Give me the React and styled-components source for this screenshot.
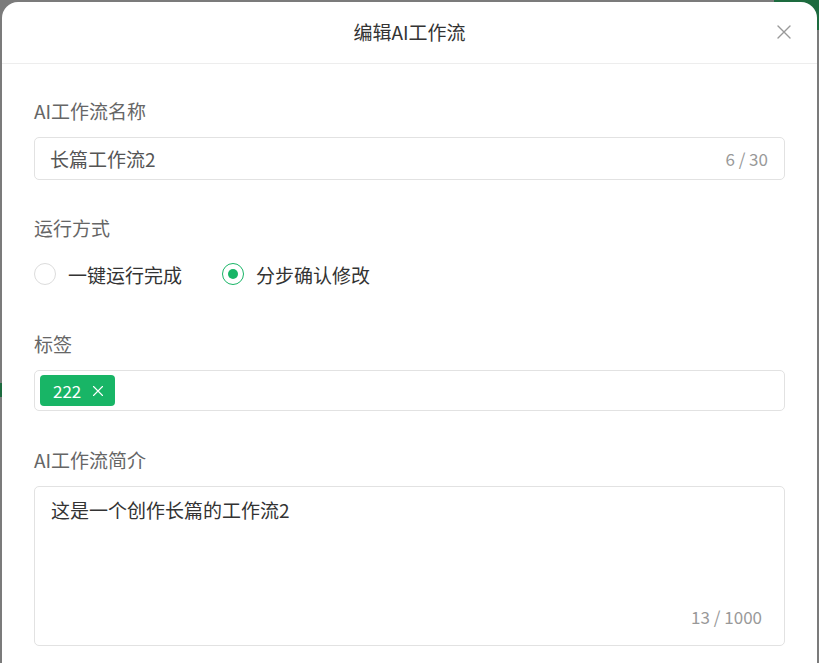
import styled, { createGlobalStyle } from "styled-components";

const Global = createGlobalStyle`
  * { box-sizing: border-box; }
  html, body { margin: 0; padding: 0; }
  body {
    background: #7b7b7b;
    font-family: "Noto Sans CJK SC", "Noto Sans", sans-serif;
    overflow: hidden;
  }
`;

const Backdrop = styled.div`
  position: relative;
  width: 819px;
  height: 663px;
  background: #7b7b7b;
  padding: 2px 2px 0 2px;
  overflow: hidden;
`;

const Behind = styled.div`
  position: absolute;
  background: #1d6b3f;
  ${({ $side }) =>
    $side === "top"
      ? "right: 0; top: 0; width: 45px; height: 30px;"
      : "left: 0; top: 383px; width: 3px; height: 14px;"}
`;

const Modal = styled.div`
  position: relative;
  background: #fff;
  border-radius: 16px 16px 0 0;
  height: 700px;
`;

const Header = styled.div`
  height: 62px;
  border-bottom: 1px solid #ededed;
  display: flex;
  align-items: center;
  justify-content: center;
  position: relative;
`;

const Title = styled.div`
  font-size: 19px;
  color: #333;
  margin-top: -2px;
`;

const Close = styled.button`
  position: absolute;
  right: 24px;
  top: 22px;
  width: 18px;
  height: 18px;
  border: 0;
  background: none;
  padding: 0;
  cursor: pointer;
`;

const Body = styled.div`
  padding: 34px 32px 0 32px;
`;

const Item = styled.div`
  margin-bottom: ${({ $gap }) => $gap ?? 36}px;
`;

const Label = styled.div`
  font-size: 19px;
  line-height: 26px;
  color: #666;
  margin-bottom: 13px;
`;

const Field = styled.div`
  height: ${({ $h }) => $h}px;
  border: 1px solid #e2e2e2;
  border-radius: 5px;
  display: flex;
  align-items: ${({ $top }) => ($top ? "flex-start" : "center")};
  position: relative;
  padding: ${({ $pad }) => $pad};
`;

const Value = styled.div`
  flex: 1;
  font-size: 19px;
  color: ${({ $c }) => $c || "#555"};
  line-height: 26px;
`;

const Count = styled.div`
  font-size: 17px;
  color: #999;
  ${({ $abs }) => ($abs ? "position: absolute; right: 22px; bottom: 16px;" : "")}
`;

const RadioRow = styled.div`
  height: 40px;
  display: flex;
  align-items: center;
  gap: 40px;
`;

const Radio = styled.label`
  display: flex;
  align-items: center;
  gap: 12px;
  font-size: 19px;
  color: #333;
  cursor: pointer;
`;

const Circle = styled.span`
  width: 22px;
  height: 22px;
  border-radius: 50%;
  border: 1px solid ${({ $on }) => ($on ? "#18b566" : "#dcdcdc")};
  display: flex;
  align-items: center;
  justify-content: center;
  &::after {
    content: "";
    width: 10px;
    height: 10px;
    border-radius: 50%;
    background: ${({ $on }) => ($on ? "#18b566" : "transparent")};
  }
`;

const Tag = styled.span`
  height: 31px;
  padding: 0 11px 0 13px;
  background: #18b566;
  color: #fff;
  border-radius: 4px;
  font-size: 17px;
  display: inline-flex;
  align-items: center;
  gap: 11px;
`;

const X = ({ size, color, w }) => (
  <svg width={size} height={size} viewBox="0 0 16 16" fill="none">
    <path d="M2 2L14 14M14 2L2 14" stroke={color} strokeWidth={w} strokeLinecap="round" />
  </svg>
);

export default function App() {
  return (
    <>
      <Global />
      <Backdrop>
        <Behind $side="top" />
        <Behind $side="left" />
        <Modal>
          <Header>
            <Title>编辑AI工作流</Title>
            <Close>
              <X size={16} color="#999" w={1.4} />
            </Close>
          </Header>
          <Body>
            <Item $gap={35}>
              <Label>AI工作流名称</Label>
              <Field $h={43} $pad="0 16px 0 15px">
                <Value>长篇工作流2</Value>
                <Count>6 / 30</Count>
              </Field>
            </Item>
            <Item $gap={37}>
              <Label>运行方式</Label>
              <RadioRow>
                <Radio>
                  <Circle />
                  一键运行完成
                </Radio>
                <Radio>
                  <Circle $on />
                  分步确认修改
                </Radio>
              </RadioRow>
            </Item>
            <Item $gap={36}>
              <Label>标签</Label>
              <Field $h={41} $pad="0 5px">
                <Tag>
                  222
                  <X size={12} color="#fff" w={1.5} />
                </Tag>
              </Field>
            </Item>
            <Item>
              <Label>AI工作流简介</Label>
              <Field $h={160} $top $pad="10px 16px">
                <Value $c="#333">这是一个创作长篇的工作流2</Value>
                <Count $abs>13 / 1000</Count>
              </Field>
            </Item>
          </Body>
        </Modal>
      </Backdrop>
    </>
  );
}
